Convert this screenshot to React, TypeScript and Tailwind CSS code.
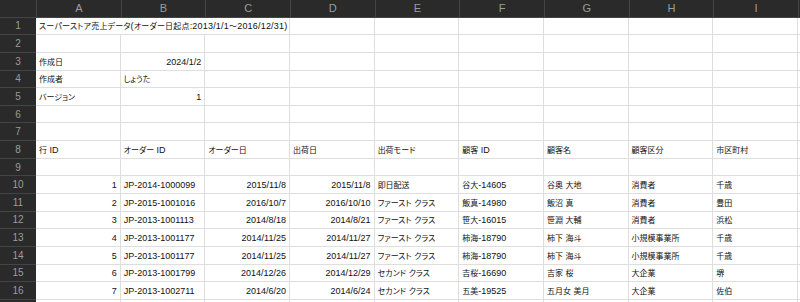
import React from 'react';

const columns = ['A', 'B', 'C', 'D', 'E', 'F', 'G', 'H', 'I'];

const title = 'スーパーストア売上データ(オーダー日起点:2013/1/1～2016/12/31)';

// spreadsheet body, rows 1..17 (row 1 is handled separately because A1 spills over)
const rows: string[][] = [
  [],
  [],
  ['作成日', '2024/1/2'],
  ['作成者', 'しょうた'],
  ['バージョン', '1'],
  [],
  [],
  ['行 ID', 'オーダー ID', 'オーダー日', '出荷日', '出荷モード', '顧客 ID', '顧客名', '顧客区分', '市区町村'],
  [],
  ['1', 'JP-2014-1000099', '2015/11/8', '2015/11/8', '即日配送', '谷大-14605', '谷奥 大地', '消費者', '千歳'],
  ['2', 'JP-2015-1001016', '2016/10/7', '2016/10/10', 'ファースト クラス', '飯真-14980', '飯沼 真', '消費者', '豊田'],
  ['3', 'JP-2013-1001113', '2014/8/18', '2014/8/21', 'ファースト クラス', '笹大-16015', '笹淵 大輔', '消費者', '浜松'],
  ['4', 'JP-2013-1001177', '2014/11/25', '2014/11/27', 'ファースト クラス', '柿海-18790', '柿下 海斗', '小規模事業所', '千歳'],
  ['5', 'JP-2013-1001177', '2014/11/25', '2014/11/27', 'ファースト クラス', '柿海-18790', '柿下 海斗', '小規模事業所', '千歳'],
  ['6', 'JP-2013-1001799', '2014/12/26', '2014/12/29', 'セカンド クラス', '吉桜-16690', '吉家 桜', '大企業', '堺'],
  ['7', 'JP-2013-1002711', '2014/6/20', '2014/6/24', 'セカンド クラス', '五美-19525', '五月女 美月', '大企業', '佐伯'],
  [],
];

const isNumeric = (v: string) => /^[\d/]+$/.test(v);

// japanese runs are set a bit smaller with proportional kana, like the sheet app does
function Text({ value }: { value: string }) {
  const parts = value.split(/([\u3000-\u9fff\uff00-\uffef]+)/).filter(Boolean);
  return (
    <span>
      {parts.map((p, i) =>
        /[\u3000-\u9fff\uff00-\uffef]/.test(p) ? (
          <span key={i} className="text-[8px] [font-feature-settings:'palt']">
            {p}
          </span>
        ) : (
          <span key={i}>{p}</span>
        )
      )}
    </span>
  );
}

function Cell({ value }: { value?: string }) {
  const right = value ? isNumeric(value) : false;
  return (
    <div
      className={`flex items-end overflow-hidden whitespace-pre border-r border-b border-[#dedede] bg-white px-[3px] pb-[2px] text-[9px] leading-[11px] text-[#111] ${
        right ? 'justify-end' : 'justify-start'
      }`}
    >
      {value && <Text value={value} />}
    </div>
  );
}

function RowHeader({ n }: { n?: number }) {
  return (
    <div className="flex items-center justify-center border-b border-[#444] bg-[#2a2a2a] text-[10px] text-[#9c9c9c]">
      {n}
    </div>
  );
}

export default function App() {
  return (
    <div
      className="h-[302px] w-[800px] overflow-hidden bg-white"
      style={{ fontFamily: '"Liberation Sans", "Noto Sans CJK JP", sans-serif' }}
    >
      <div className="grid grid-cols-[36px_repeat(9,84.67px)_1fr] grid-rows-[17.6px_repeat(17,17.65px)]">
        {/* column headers */}
        <div className="border-b border-[#444] bg-[#2a2a2a]" />
        {columns.map((c) => (
          <div
            key={c}
            className="flex items-center justify-center border-b border-l border-[#444] bg-[#2a2a2a] pb-[1px] text-[11px] text-[#9c9c9c]"
          >
            {c}
          </div>
        ))}
        <div className="border-b border-l border-[#444] bg-[#2a2a2a]" />

        {/* row 1: title spills across A..C */}
        <RowHeader n={1} />
        <div className="col-span-3 flex items-end whitespace-pre border-r border-b border-[#dedede] bg-white px-[3px] pb-[2px] text-[9px] leading-[11px] tracking-[0.2px] text-[#111]">
          <Text value={title} />
        </div>
        {columns.slice(3).map((c) => (
          <Cell key={c} />
        ))}
        <Cell />

        {rows.slice(1).map((row, i) => (
          <React.Fragment key={i}>
            <RowHeader n={i + 2 < 17 ? i + 2 : undefined} />
            {columns.map((c, j) => (
              <Cell key={c} value={row[j]} />
            ))}
            <Cell />
          </React.Fragment>
        ))}
      </div>
    </div>
  );
}
